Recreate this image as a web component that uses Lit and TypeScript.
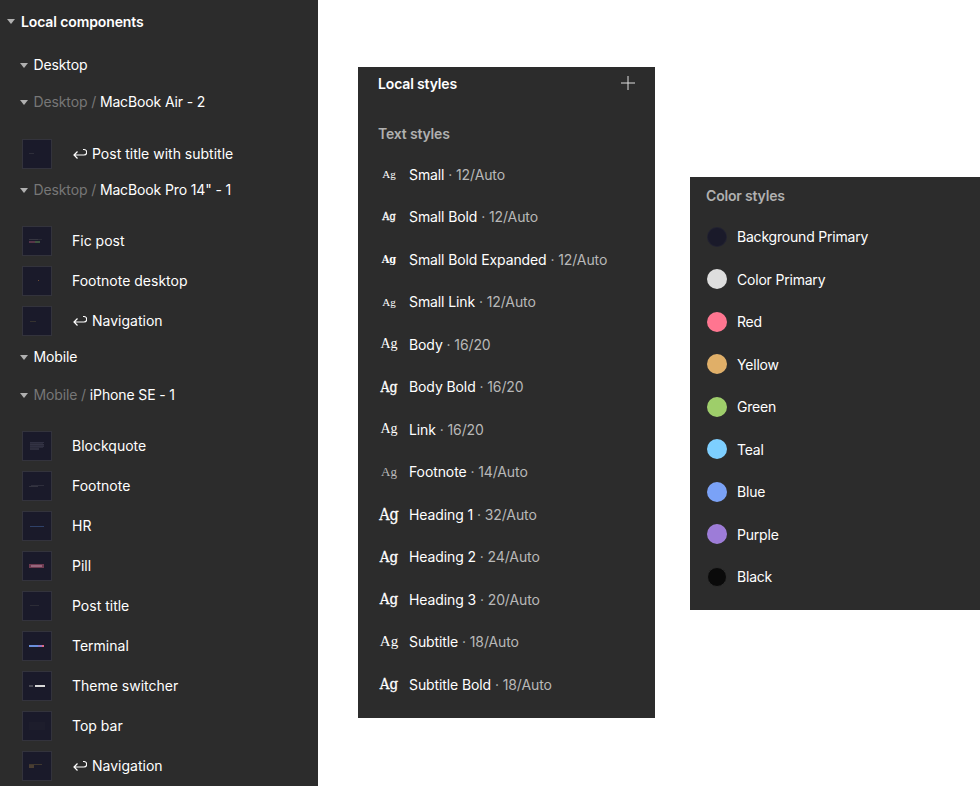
import { LitElement, html, css, svg } from 'lit';
import { customElement } from 'lit/decorators.js';

type Mark = [x: number, y: number, w: number, h: number, fill: string];
interface Comp { name: string; linked?: boolean; marks: Mark[] }
interface Group { kind: string; parent?: string; name: string; comps?: Comp[] }

const groups: Group[] = [
  { kind: 'first', name: 'Desktop' },
  {
    kind: 'sub', parent: 'Desktop', name: 'MacBook Air - 2',
    comps: [{ name: 'Post title with subtitle', linked: true, marks: [[7, 14, 5, 1, '#2e2e3a']] }],
  },
  {
    kind: 'next', parent: 'Desktop', name: 'MacBook Pro 14" - 1',
    comps: [
      {
        name: 'Fic post',
        marks: [
          [7, 13, 9, 1, '#353540'],
          [7, 15, 6, 2, '#573448'],
          [13, 15, 5, 2, '#3f5540'],
          [16, 13, 4, 1, '#292935'],
        ],
      },
      { name: 'Footnote desktop', marks: [[16, 14, 1, 1, '#6e4a36']] },
      { name: 'Navigation', linked: true, marks: [[8, 15, 6, 1, '#35322f']] },
    ],
  },
  { kind: 'next', name: 'Mobile' },
  {
    kind: 'sub2', parent: 'Mobile', name: 'iPhone SE - 1',
    comps: [
      {
        name: 'Blockquote',
        marks: [
          [8, 11, 14, 1, '#303042'],
          [8, 12, 13, 1, '#2a2a3a'],
          [8, 13, 14, 1, '#333344'],
          [8, 14, 14, 1, '#2a2a3a'],
          [8, 15, 14, 1, '#303042'],
          [8, 16, 13, 1, '#2a2a3a'],
          [8, 17, 9, 2, '#2e2e3e'],
        ],
      },
      { name: 'Footnote', marks: [[9, 14, 13, 1, '#2e2e3c'], [7, 15, 9, 1, '#33333f']] },
      { name: 'HR', marks: [[8, 15, 14, 1, '#2f4168']] },
      { name: 'Pill', marks: [[7, 13, 15, 4, '#6e3a50'], [9, 14, 11, 2, '#96667c']] },
      { name: 'Post title', marks: [[8, 14, 9, 1, '#2c2c36']] },
      { name: 'Terminal', marks: [[7, 14, 9, 2, '#6a8fdc'], [16, 14, 4, 2, '#8f76c4'], [20, 14, 2, 2, '#e06a84']] },
      { name: 'Theme switcher', marks: [[7, 14, 4, 2, '#4a4a55'], [13, 14, 10, 2, '#d8d8d8']] },
      { name: 'Top bar', marks: [[7, 11, 16, 8, '#1d1d2c']] },
      { name: 'Navigation', linked: true, marks: [[7, 13, 13, 1, '#40382f'], [7, 14, 5, 3, '#4a3e32']] },
    ],
  },
];

const textStyles = [
  ['Small', '12/Auto', 'thin s11'],
  ['Small Bold', '12/Auto', 'cond s11 heavy'],
  ['Small Bold Expanded', '12/Auto', 'cond s11 bold'],
  ['Small Link', '12/Auto', 'thin s11'],
  ['Body', '16/20', 'thin s14'],
  ['Body Bold', '16/20', 'cond s14 heavy'],
  ['Link', '16/20', 'thin s14'],
  ['Footnote', '14/Auto', 'thin s13'],
  ['Heading 1', '32/Auto', 'cond s16 heavy'],
  ['Heading 2', '24/Auto', 'cond s15 heavy'],
  ['Heading 3', '20/Auto', 'cond s15 heavy'],
  ['Subtitle', '18/Auto', 'thin s15'],
  ['Subtitle Bold', '18/Auto', 'cond s15 heavy'],
];

const colorStyles = [
  ['Background Primary', '#1a1a2a'],
  ['Color Primary', '#dedede'],
  ['Red', '#ff7590'],
  ['Yellow', '#e0af68'],
  ['Green', '#9ece6a'],
  ['Teal', '#7dcfff'],
  ['Blue', '#7aa2f7'],
  ['Purple', '#9d7cd8'],
  ['Black', '#0a0a0a'],
];

@customElement('app-root')
export class AppRoot extends LitElement {
  static styles = css`
    :host {
      display: flex;
      align-items: flex-start;
      width: 980px;
      height: 786px;
      overflow: hidden;
      background: #fff;
      font-family: Inter, 'Liberation Sans', sans-serif;
      font-size: 14px;
      color: #fff;
    }

    .panel {
      background: #2c2c2c;
      box-sizing: border-box;
      flex: none;
    }

    /* components */
    .components {
      width: 318px;
      height: 786px;
      padding-left: 7px;
    }
    .head {
      display: flex;
      align-items: center;
      height: 30px;
      padding-left: 13px;
      gap: 5.5px;
      letter-spacing: -0.13px;
    }
    .head.root {
      height: 43px;
      padding-left: 0;
      gap: 6px;
      font-weight: 600;
      letter-spacing: -0.12px;
    }
    .head.first { margin-top: 7px; }
    .head.sub { margin-top: 7px; margin-bottom: 17px; }
    .head.next { margin-top: 1px; margin-bottom: 16px; }
    .head.plain { margin-bottom: 0; }
    .head.sub2 { margin-top: 8px; margin-bottom: 16px; }
    .caret {
      width: 0;
      height: 0;
      border-left: 4px solid transparent;
      border-right: 4px solid transparent;
      border-top: 5px solid #b0b0b0;
      flex: none;
    }
    .parent { color: #777; }
    .title { margin-bottom: 1px; }
    .row {
      display: flex;
      align-items: center;
      height: 40px;
      padding-left: 15px;
    }
    .thumb {
      width: 30px;
      height: 30px;
      flex: none;
      display: block;
      margin-right: 20px;
    }
    .link {
      width: 14px;
      height: 12px;
      margin: 0 5px 0 1px;
      flex: none;
    }

    /* text styles */
    .styles {
      width: 297px;
      height: 651px;
      margin: 67px 0 0 40px;
      padding: 0 20px;
    }
    .styles-head {
      display: flex;
      align-items: center;
      justify-content: space-between;
      height: 33px;
      font-weight: 600;
      letter-spacing: -0.15px;
    }
    .plus { width: 14px; height: 14px; margin-top: -1px; }
    .label {
      color: #b0b0b0;
      font-weight: 600;
      letter-spacing: -0.18px;
    }
    .styles .label { margin-top: 25px; line-height: 18px; }
    .list { margin-top: 10px; letter-spacing: -0.1px; }
    .style-row {
      display: flex;
      align-items: center;
      height: 42.5px;
    }
    .ag {
      width: 22px;
      margin-right: 9px;
      text-align: center;
      letter-spacing: 0;
      flex: none;
    }
    .thin { font-family: 'Liberation Serif', serif; }
    .cond { font-family: 'DejaVu Serif', 'Liberation Serif', serif; font-stretch: condensed; }
    .s11 { font-size: 11px; }
    .s13 { font-size: 13px; color: #bbb; }
    .s14 { font-size: 14px; }
    .s15 { font-size: 15px; }
    .s16 { font-size: 16px; }
    .bold { font-weight: 700; }
    .heavy { -webkit-text-stroke: 0.3px #fff; }
    .meta { color: #b8b8b8; }

    /* colours */
    .colors {
      width: 290px;
      height: 433px;
      margin: 177px 0 0 35px;
      padding: 10px 16px 0;
    }
    .colors .label { line-height: 18px; }
    .color-list { margin-top: 10.5px; letter-spacing: -0.2px; }
    .color-row {
      display: flex;
      align-items: center;
      height: 42.5px;
      gap: 10px;
    }
    .swatch {
      width: 20px;
      height: 20px;
      margin-left: 1px;
      border-radius: 50%;
      flex: none;
      box-sizing: border-box;
      border: 1px solid rgba(255, 255, 255, 0.03);
    }
    .swatch.small { border: 1px solid #2c2c2c; }
  `;

  private _linkIcon() {
    return html`<svg class="link" viewBox="0 0 14 12" fill="none" stroke="#fff" stroke-width="1.2">
      <path d="M10 1.5h1a2.75 2.75 0 0 1 0 5.5H1M4.5 3.5 1 7l3.5 3.5" />
    </svg>`;
  }

  private _thumb(marks: Mark[]) {
    return html`<svg class="thumb" viewBox="0 0 30 30">
      <rect x="0.5" y="0.5" width="29" height="29" fill="#1a1a2a" stroke="#33333c" />
      ${marks.map(([x, y, w, h, fill]) => svg`<rect x=${x} y=${y} width=${w} height=${h} fill=${fill} />`)}
    </svg>`;
  }

  private _group(g: Group) {
    const spaced = g.comps ? g.kind : `${g.kind} plain`;
    return html`
      <div class="head ${spaced}">
        <span class="caret"></span>
        <span class="title">${g.parent ? html`<span class="parent">${g.parent} / </span>` : ''}${g.name}</span>
      </div>
      ${(g.comps ?? []).map(
        (c) => html`<div class="row">
          ${this._thumb(c.marks)}${c.linked ? this._linkIcon() : ''}<span class="title">${c.name}</span>
        </div>`
      )}
    `;
  }

  render() {
    return html`
      <section class="panel components">
        <div class="head root"><span class="caret"></span><span>Local components</span></div>
        ${groups.map((g) => this._group(g))}
      </section>

      <section class="panel styles">
        <div class="styles-head">
          <span>Local styles</span>
          <svg class="plus" viewBox="0 0 14 14" stroke="#ddd" stroke-width="1">
            <path d="M7 0v14M0 7h14" />
          </svg>
        </div>
        <div class="label">Text styles</div>
        <div class="list">
          ${textStyles.map(
            ([name, meta, cls]) => html`<div class="style-row">
              <span class="ag ${cls}">Ag</span>
              <span>${name}<span class="meta"> · ${meta}</span></span>
            </div>`
          )}
        </div>
      </section>

      <section class="panel colors">
        <div class="label">Color styles</div>
        <div class="color-list">
          ${colorStyles.map(
            ([name, color]) => html`<div class="color-row">
              <span class="swatch ${name === 'Black' ? 'small' : ''}" style="background:${color}"></span>
              <span>${name}</span>
            </div>`
          )}
        </div>
      </section>
    `;
  }
}
